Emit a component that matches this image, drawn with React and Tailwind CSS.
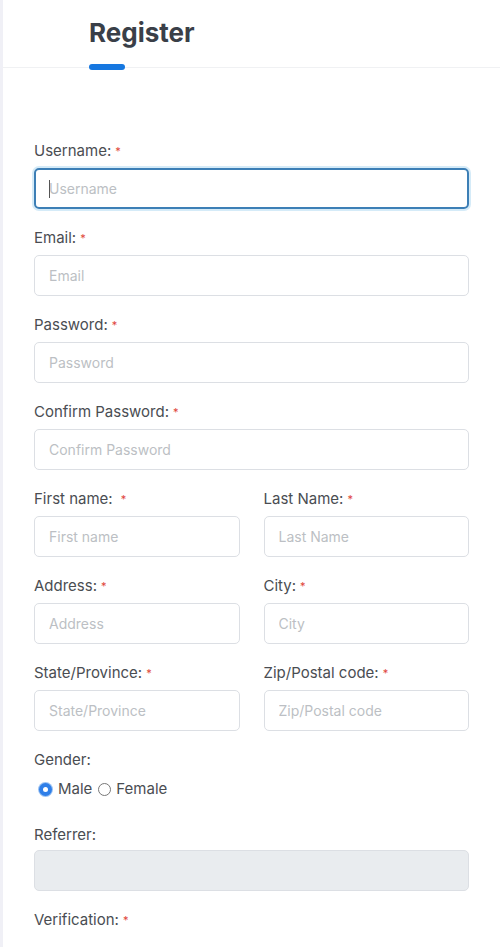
import React from 'react';

function Label({ text, required, spaced }) {
  return (
    <label className="block h-5 text-[15px] leading-5 text-[#4a4d52]">
      {text}
      {required && <span className={`text-[11px] text-[#e0453a] align-top ${spaced ? 'ml-2' : 'ml-1'}`}>*</span>}
    </label>
  );
}

function Field({ label, placeholder, required = true, focused, spaced }) {
  return (
    <div className="mb-[19px]">
      <Label text={label} required={required} spaced={spaced} />
      <div className="mt-[7px] relative">
        {focused && <span className="absolute left-[15px] top-[12px] h-[18px] w-px bg-[#555] z-10" />}
        <input
          placeholder={placeholder}
          className={
            focused
              ? 'block w-full h-[41px] rounded-[5px] border-2 border-[#3d7fb6] px-[13px] text-[14px] text-[#333] placeholder:text-[#bcbfc4] outline-none shadow-[0_0_0_2px_#d5ebf8]'
              : 'block w-full h-[41px] rounded-[5px] border border-[#dcdfe4] bg-white px-[14px] text-[14px] text-[#333] placeholder:text-[#bcbfc4] outline-none'
          }
        />
      </div>
    </div>
  );
}

export default function App() {
  return (
    <div className="w-[500px] min-h-[947px] bg-white border-l-[3px] border-[#f0f0f6]" style={{ fontFamily: 'Inter, "Noto Sans", sans-serif' }}>
      {/* tab header */}
      <div className="h-[68px] border-b border-[#f0f1f3] pl-[86px] pt-[17px]">
        <h2 className="text-[26px] leading-[32px] font-bold text-[#3a3f48]">Register</h2>
        <div className="mt-[15px] h-[6px] w-[36px] rounded-full bg-[#1677e0]" />
      </div>

      <form className="pl-[31px] pr-[31px] pt-[73px]">
        <Field label="Username:" placeholder="Username" focused />
        <Field label="Email:" placeholder="Email" />
        <Field label="Password:" placeholder="Password" />
        <Field label="Confirm Password:" placeholder="Confirm Password" />

        <div className="grid grid-cols-2 gap-x-[24px]">
          <Field label="First name:" placeholder="First name" spaced />
          <Field label="Last Name:" placeholder="Last Name" />
          <Field label="Address:" placeholder="Address" />
          <Field label="City:" placeholder="City" />
          <Field label="State/Province:" placeholder="State/Province" />
          <Field label="Zip/Postal code:" placeholder="Zip/Postal code" />
        </div>

        <div>
          <Label text="Gender:" />
          <div className="mt-[9px] flex items-center h-5 pl-[5px] text-[15px] text-[#4a4d52]">
            <span className="w-[13px] h-[13px] rounded-full bg-[#2f7fe8] flex items-center justify-center shadow-[0_0_0_1px_#9cc3f3]">
              <span className="w-[5px] h-[5px] rounded-full bg-white" />
            </span>
            <span className="ml-[6px]">Male</span>
            <span className="ml-[6px] w-[13px] h-[13px] rounded-full border border-[#777]" />
            <span className="ml-[5px]">Female</span>
          </div>
        </div>

        <div className="mt-[26px] mb-[19px]">
          <Label text="Referrer:" />
          <div className="mt-[5px]">
            <input disabled className="block w-full h-[41px] rounded-[5px] border border-[#dcdfe4] bg-[#e9ecef] outline-none" />
          </div>
        </div>

        <Label text="Verification:" required />
      </form>
    </div>
  );
}
